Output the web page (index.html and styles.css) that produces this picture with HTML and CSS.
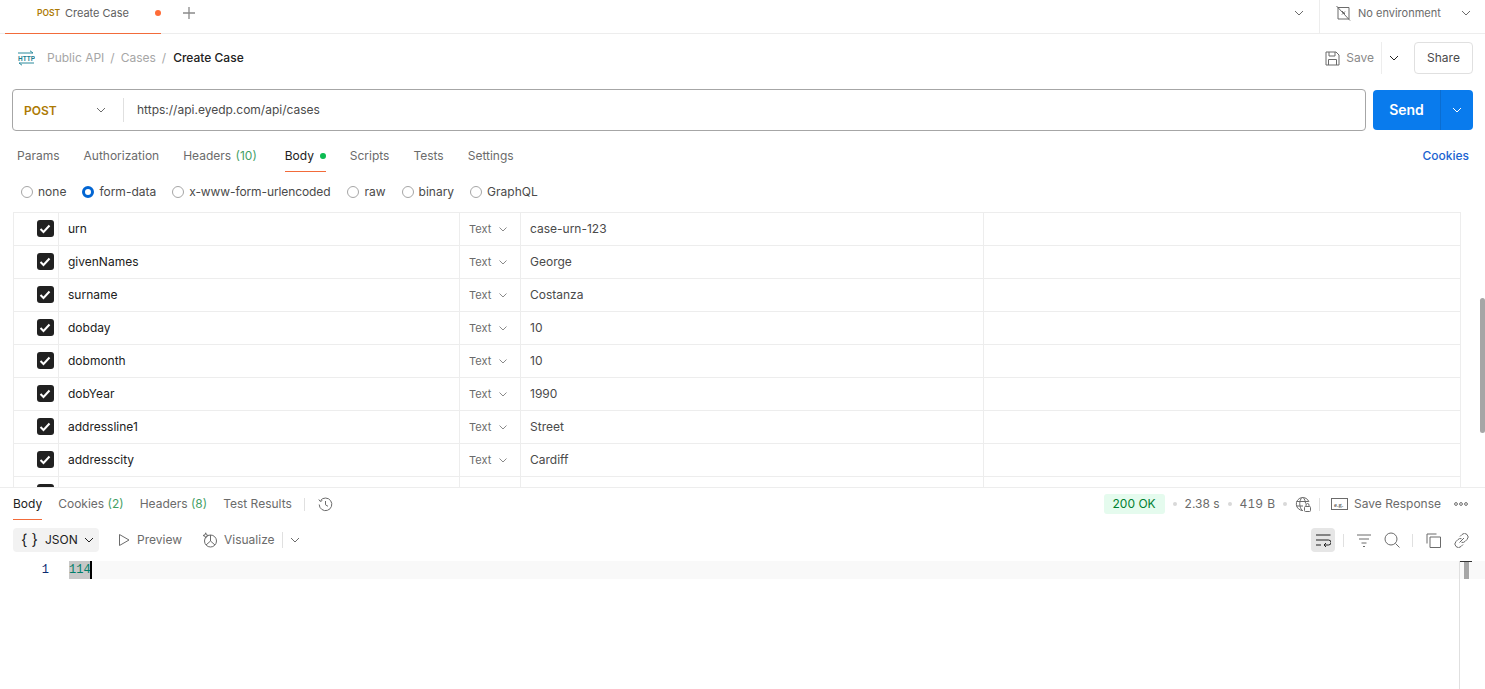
FILE: index.html
```html
<!DOCTYPE html>
<html lang="en">
<head>
<meta charset="utf-8">
<title>Create Case</title>
<link rel="stylesheet" href="styles.css">
</head>
<body>
<div class="app">
  <header class="tabbar">
    <div class="tab">
      <span class="tab-method">POST</span>
      <span class="tab-name">Create Case</span>
      <span class="tab-dot"></span>
    </div>
    <svg class="tab-plus" width="14" height="14" viewBox="0 0 14 14"><path d="M7 1v12M1 7h12" stroke="#8a8a8a" stroke-width="1.3" fill="none"/></svg>
    <div class="tabbar-space"></div>
    <svg class="chev tab-chev" width="10" height="6" viewBox="0 0 10 6"><path d="M1 1l4 4 4-4" stroke="#6b6b6b" fill="none"/></svg>
    <div class="env">
      <svg width="16" height="16" viewBox="0 0 16 16" fill="none" stroke="#6b6b6b"><path d="M3 2.500h11v11.500H3zM1.500 1l13.500 14.500M7 6l3 3M10 6.500l-3 3"/></svg>
      <span class="env-name">No environment</span>
      <svg class="chev" width="10" height="6" viewBox="0 0 10 6"><path d="M1 1l4 4 4-4" stroke="#6b6b6b" fill="none"/></svg>
    </div>
  </header>

  <div class="crumbs">
    <svg class="http-icon" width="18" height="16" viewBox="0 0 18 16" fill="none" stroke="#2b8a9b" stroke-width="1"><path d="M1 3h15M13 .8 16 3M17 13H2M5 15.200 2 13"/><text x="1" y="11" class="http-text">HTTP</text></svg>
    <span class="crumb">Public API</span><span class="sep">/</span>
    <span class="crumb">Cases</span><span class="sep">/</span>
    <span class="crumb-current">Create Case</span>
    <div class="crumb-space"></div>
    <svg width="15" height="15" viewBox="0 0 15 15" fill="none" stroke="#6b6b6b"><path d="M1 1h10l3 3v10H1zM4 1v4h6V1M3.500 14V8.500h8V14"/></svg>
    <span class="save">Save</span>
    <span class="save-div"></span>
    <svg class="save-chev" width="10" height="6" viewBox="0 0 10 6"><path d="M1 1l4 4 4-4" stroke="#212121" fill="none"/></svg>
    <button class="share">Share</button>
  </div>

  <div class="urlrow">
    <div class="urlbox">
      <span class="method">POST</span>
      <svg class="method-chev" width="10" height="6" viewBox="0 0 10 6"><path d="M1 1l4 4 4-4" stroke="#6b6b6b" fill="none"/></svg>
      <span class="url">https://api.eyedp.com/api/cases</span>
    </div>
    <div class="send">
      <span class="send-label">Send</span>
      <span class="send-more"><svg width="10" height="6" viewBox="0 0 10 6"><path d="M1 1l4 4 4-4" stroke="#fff" fill="none"/></svg></span>
    </div>
  </div>

  <nav class="reqtabs">
    <span class="rt">Params</span>
    <span class="rt">Authorization</span>
    <span class="rt rt-headers">Headers <em class="count">(10)</em></span>
    <span class="rt rt-active">Body <i class="green-dot"></i></span>
    <span class="rt">Scripts</span>
    <span class="rt">Tests</span>
    <span class="rt">Settings</span>
    <span class="cookies">Cookies</span>
  </nav>

  <div class="radios">
    <label class="radio"><i class="rd"></i>none</label>
    <label class="radio"><i class="rd rd-on"></i>form-data</label>
    <label class="radio radio-long"><i class="rd"></i>x-www-form-urlencoded</label>
    <label class="radio"><i class="rd"></i>raw</label>
    <label class="radio"><i class="rd"></i>binary</label>
    <label class="radio"><i class="rd"></i>GraphQL</label>
  </div>

  <div class="tablewrap">
    <div class="kv">
      <div class="row"><div class="c c-check"><span class="cb"><svg width="12" height="10" viewBox="0 0 12 10"><path d="M1.500 5l3 3 6-6.500" stroke="#fff" stroke-width="2" fill="none"/></svg></span></div><div class="c c-key">urn</div><div class="c c-type">Text<svg width="8" height="5" viewBox="0 0 8 5"><path d="M.5.500 4 4 7.500.500" stroke="#8a8a8a" fill="none"/></svg></div><div class="c c-val">case-urn-123</div><div class="c c-desc"></div></div>
      <div class="row"><div class="c c-check"><span class="cb"><svg width="12" height="10" viewBox="0 0 12 10"><path d="M1.500 5l3 3 6-6.500" stroke="#fff" stroke-width="2" fill="none"/></svg></span></div><div class="c c-key">givenNames</div><div class="c c-type">Text<svg width="8" height="5" viewBox="0 0 8 5"><path d="M.5.500 4 4 7.500.500" stroke="#8a8a8a" fill="none"/></svg></div><div class="c c-val">George</div><div class="c c-desc"></div></div>
      <div class="row"><div class="c c-check"><span class="cb"><svg width="12" height="10" viewBox="0 0 12 10"><path d="M1.500 5l3 3 6-6.500" stroke="#fff" stroke-width="2" fill="none"/></svg></span></div><div class="c c-key">surname</div><div class="c c-type">Text<svg width="8" height="5" viewBox="0 0 8 5"><path d="M.5.500 4 4 7.500.500" stroke="#8a8a8a" fill="none"/></svg></div><div class="c c-val">Costanza</div><div class="c c-desc"></div></div>
      <div class="row"><div class="c c-check"><span class="cb"><svg width="12" height="10" viewBox="0 0 12 10"><path d="M1.500 5l3 3 6-6.500" stroke="#fff" stroke-width="2" fill="none"/></svg></span></div><div class="c c-key">dobday</div><div class="c c-type">Text<svg width="8" height="5" viewBox="0 0 8 5"><path d="M.5.500 4 4 7.500.500" stroke="#8a8a8a" fill="none"/></svg></div><div class="c c-val">10</div><div class="c c-desc"></div></div>
      <div class="row"><div class="c c-check"><span class="cb"><svg width="12" height="10" viewBox="0 0 12 10"><path d="M1.500 5l3 3 6-6.500" stroke="#fff" stroke-width="2" fill="none"/></svg></span></div><div class="c c-key">dobmonth</div><div class="c c-type">Text<svg width="8" height="5" viewBox="0 0 8 5"><path d="M.5.500 4 4 7.500.500" stroke="#8a8a8a" fill="none"/></svg></div><div class="c c-val">10</div><div class="c c-desc"></div></div>
      <div class="row"><div class="c c-check"><span class="cb"><svg width="12" height="10" viewBox="0 0 12 10"><path d="M1.500 5l3 3 6-6.500" stroke="#fff" stroke-width="2" fill="none"/></svg></span></div><div class="c c-key">dobYear</div><div class="c c-type">Text<svg width="8" height="5" viewBox="0 0 8 5"><path d="M.5.500 4 4 7.500.500" stroke="#8a8a8a" fill="none"/></svg></div><div class="c c-val">1990</div><div class="c c-desc"></div></div>
      <div class="row"><div class="c c-check"><span class="cb"><svg width="12" height="10" viewBox="0 0 12 10"><path d="M1.500 5l3 3 6-6.500" stroke="#fff" stroke-width="2" fill="none"/></svg></span></div><div class="c c-key">addressline1</div><div class="c c-type">Text<svg width="8" height="5" viewBox="0 0 8 5"><path d="M.5.500 4 4 7.500.500" stroke="#8a8a8a" fill="none"/></svg></div><div class="c c-val">Street</div><div class="c c-desc"></div></div>
      <div class="row"><div class="c c-check"><span class="cb"><svg width="12" height="10" viewBox="0 0 12 10"><path d="M1.500 5l3 3 6-6.500" stroke="#fff" stroke-width="2" fill="none"/></svg></span></div><div class="c c-key">addresscity</div><div class="c c-type">Text<svg width="8" height="5" viewBox="0 0 8 5"><path d="M.5.500 4 4 7.500.500" stroke="#8a8a8a" fill="none"/></svg></div><div class="c c-val">Cardiff</div><div class="c c-desc"></div></div>
      <div class="row"><div class="c c-check"><span class="cb"></span></div><div class="c c-key"></div><div class="c c-type"></div><div class="c c-val"></div><div class="c c-desc"></div></div>
    </div>
    <div class="scrollthumb"></div>
  </div>

  <section class="response">
    <div class="restabs">
      <span class="rs rs-active">Body</span>
      <span class="rs">Cookies <em class="count">(2)</em></span>
      <span class="rs">Headers <em class="count">(8)</em></span>
      <span class="rs rs-last">Test Results</span>
      <span class="vdiv"></span>
      <svg class="hist" width="15" height="15" viewBox="0 0 15 15" fill="none" stroke="#6b6b6b"><path d="M2.500 3.500A6.300 6.300 0 1 1 1.200 7.500M.8 2.500l1.500 2 2-1M7.500 4v3.800l2.500 1.500"/></svg>
      <div class="res-space"></div>
      <span class="status">200 OK</span>
      <i class="mid"></i><span class="meta">2.38 s</span>
      <i class="mid"></i><span class="meta meta-size">419 B</span>
      <i class="mid mid-last"></i>
      <svg class="globe" width="16" height="16" viewBox="0 0 16 16" fill="none" stroke="#6b6b6b"><path d="M8 14.500A6.500 6.500 0 1 1 14 6M1.500 5.500h12M1.500 10H8M7 1.500c-3 3-3 9 0 13M8 1.500c1.500 1.500 2.500 3.500 2.500 6"/><rect x="9.500" y="10.500" width="6" height="5" rx="1" fill="#fff"/><path d="M11 10.500V9a1.500 1.500 0 0 1 3 0v1.500"/></svg>
      <span class="vdiv vdiv-r"></span>
      <svg width="17" height="12" viewBox="0 0 17 12" fill="none"><rect x=".5" y=".5" width="16" height="11" stroke="#6b6b6b"/><text x="3" y="8.500" class="eg">e.g.</text></svg>
      <span class="saveres">Save Response</span>
      <svg class="dots" width="14" height="4" viewBox="0 0 14 4" fill="none" stroke="#6b6b6b"><circle cx="2" cy="2" r="1.400"/><circle cx="7" cy="2" r="1.400"/><circle cx="12" cy="2" r="1.400"/></svg>
    </div>
    <div class="toolbar">
      <div class="json"><span class="braces">{ }</span><span>JSON</span><svg width="10" height="6" viewBox="0 0 10 6"><path d="M1 1l4 4 4-4" stroke="#212121" fill="none"/></svg></div>
      <svg class="play" width="12" height="14" viewBox="0 0 12 14" fill="none"><path d="M1.500 1.500 11 7l-9.500 5.500z" stroke="#6b6b6b"/></svg>
      <span class="tb-label tb-preview">Preview</span>
      <svg class="viz" width="16" height="16" viewBox="0 0 16 16" fill="none" stroke="#6b6b6b"><circle cx="8.500" cy="9" r="6"/><path d="M8.500 3v6l4.500 4M8.500 9l-4.500 4M1 3.500l2-.7.700-2 .7 2 2 .7-2 .7-.7 2-.7-2z"/></svg>
      <span class="tb-label">Visualize</span>
      <span class="vdiv vdiv-t"></span>
      <svg class="tb-chev" width="10" height="6" viewBox="0 0 10 6"><path d="M1 1l4 4 4-4" stroke="#6b6b6b" fill="none"/></svg>
      <div class="res-space"></div>
      <span class="wrapbtn"><svg width="15" height="13" viewBox="0 0 15 13" fill="none" stroke="#212121"><path d="M0 1h14.500M0 6h12.500a2 2 0 0 1 0 5H8M10 9l-2 2 2 2M0 11h5"/></svg></span>
      <span class="vdiv vdiv-a"></span>
      <svg width="14" height="13" viewBox="0 0 14 13" fill="none" stroke="#6b6b6b"><path d="M0 1h14M2 5h10M4.500 9h5M6 12.500h2"/></svg>
      <svg class="ico-search" width="16" height="16" viewBox="0 0 16 16" fill="none" stroke="#6b6b6b"><circle cx="7" cy="7" r="6"/><path d="M11.500 11.500l4 4"/></svg>
      <span class="vdiv vdiv-b"></span>
      <svg width="15" height="15" viewBox="0 0 15 15" fill="none" stroke="#6b6b6b"><path d="M4 4h10.500v10.500H4zM1 10.500V1h9.500" stroke-linejoin="round"/></svg>
      <svg class="ico-link" width="15" height="15" viewBox="0 0 15 15" fill="none" stroke="#6b6b6b"><path d="M5.500 9.500l4.500-4.500M6 3.500l2-2a3.500 3.500 0 0 1 5 5l-2 2a3.500 3.500 0 0 1-3.500.8M9 11.500l-2 2a3.500 3.500 0 0 1-5-5l2-2a3.500 3.500 0 0 1 3.500-.8"/></svg>
    </div>
    <div class="editor">
      <span class="ln">1</span>
      <div class="code-line"><span class="code">114</span><span class="caret"></span></div>
      <div class="minimap"><span class="mini-bar"></span></div>
    </div>
  </section>
</div>
</body>
</html>
```

FILE: styles.css
```css
* { box-sizing: border-box; }
html, body { margin: 0; height: 100%; overflow: hidden; background: #fff; }
body { font-family: Inter, "Liberation Sans", sans-serif; font-size: 12px; color: #6b6b6b; }
em { font-style: normal; }
svg { flex: none; display: block; }
.app { height: 689px; display: flex; flex-direction: column; overflow: hidden; position: relative; }

.tabbar { height: 34px; flex: none; display: flex; align-items: center; border-bottom: 1px solid #ededed; padding-left: 5px; }
.tab { width: 156px; height: 34px; display: flex; align-items: center; padding: 0 0 7px 32px; border-bottom: 1px solid #f26b3a; font-size: 11px; white-space: nowrap; }
.tab-method { font-size: 8.500px; font-weight: 600; color: #ad7a03; width: 28px; }
.tab-name { color: #5e5e5e; }
.tab-dot { width: 6px; height: 6px; border-radius: 50%; background: #ff6c37; margin-left: 26px; }
.tab-plus { margin-left: 21px; margin-bottom: 7px; }
.tabbar-space { flex: 1; }
.tab-chev { margin-right: 15px; margin-bottom: 7px; }
.env { width: 166px; height: 33px; display: flex; align-items: center; border-left: 1px solid #ededed; padding: 0 0 7px 15px; align-self: flex-start; }
.env-name { font-size: 11px; margin-left: 7px; color: #6b6b6b; width: 103px; white-space: nowrap; }

.crumbs { height: 48px; flex: none; display: flex; align-items: center; padding: 0 12px 0 17px; line-height: 14px; }
.http-icon { margin-right: 12px; }
.http-text { font: 700 6.500px "Liberation Sans", sans-serif; fill: #1f7f91; stroke: none; }
.crumb { color: #a6a6a6; }
.sep { color: #a6a6a6; margin: 0 6px; }
.crumb-current { color: #212121; font-weight: 500; margin-left: 1px; }
.crumb-space { flex: 1; }
.save { margin-left: 6px; color: #8a8a8a; }
.save-div { width: 1px; height: 32px; background: #ededed; margin: 0 7px 0 7px; }
.save-chev { margin-right: 15px; }
.share { width: 59px; height: 32px; border: 1px solid #e0e0e0; border-radius: 4px; background: #fff; font: 12px/14px Inter, sans-serif; color: #4a4a4a; padding: 0; }

.urlrow { flex: none; height: 42px; margin: 7px 12px 0; display: flex; gap: 7px; align-items: center; }
.urlbox { width: 1354px; height: 42px; border: 1px solid #a6a6a6; border-radius: 4px; display: flex; align-items: center; padding-left: 11px; }
.method { width: 72px; font-weight: 600; color: #ad7a03; font-size: 12px; }
.method-chev { margin-right: 17px; }
.url { border-left: 1px solid #e0e0e0; padding-left: 13px; height: 24px; line-height: 24px; color: #4a4a4a; }
.send { width: 100px; height: 40px; background: #097bed; border-radius: 4px; display: flex; color: #fff; align-items: stretch; }
.send-label { width: 68px; text-align: center; line-height: 40px; font-size: 14px; font-weight: 600; border-right: 1px solid #0a6dd1; }
.send-more { flex: 1; display: flex; align-items: center; justify-content: center; }

.reqtabs { flex: none; height: 41px; display: flex; padding: 0 16px 0 17px; align-items: stretch; }
.rt { margin-right: 24px; line-height: 42px; height: 41px; padding-top: 4px; color: #6b6b6b; white-space: nowrap; }
.rt-headers { margin-right: 28px; }
.rt-headers .count { margin-left: 1px; }
.rt-active { color: #212121; border-bottom: 1px solid #f26b3a; width: 41px; display: flex; align-items: center; gap: 6px; line-height: 14px; padding-top: 9px; }
.count { color: #007f31; opacity: .75; }
.green-dot { width: 6px; height: 6px; border-radius: 50%; background: #0cbb52; display: block; }
.cookies { margin-left: auto; color: #1a63d1; font-weight: 500; line-height: 42px; padding-top: 4px; height: 41px; }

.radios { flex: none; height: 40px; display: flex; align-items: center; padding: 0 0 0 21px; line-height: 14px; }
.radio { display: flex; align-items: center; gap: 5px; margin-right: 16px; color: #4a4a4a; height: 40px; }
.radio-long { letter-spacing: -.1px; margin-right: 17px; }
.rd { width: 12px; height: 12px; border-radius: 50%; border: 1px solid #a6a6a6; display: block; }
.rd-on { border: 3.500px solid #0265d2; }

.tablewrap { flex: none; height: 276px; overflow: hidden; padding-left: 13px; border-bottom: 1px solid #ededed; }
.kv { width: 1448px; border-top: 1px solid #ededed; }
.row { height: 33px; display: flex; border-bottom: 1px solid #ededed; }
.c { border-left: 1px solid #ededed; display: flex; align-items: center; color: #212121; padding-left: 9px; height: 32px; line-height: 14px; }
.c-check { width: 45px; justify-content: center; padding: 0 0 1px 18px; }
.c-key { width: 401px; color: #212121; }
.c-type { width: 61px; justify-content: flex-start; color: #6b6b6b; font-size: 11px; gap: 8px; }
.c-val { width: 463px; color: #4a4a4a; }
.c-desc { flex: 1; border-right: 1px solid #ededed; }
.cb { width: 17px; height: 17px; border-radius: 3px; background: #212121; display: flex; align-items: center; justify-content: center; }
.scrollthumb { position: absolute; left: 1480px; top: 298px; width: 5px; height: 135px; background: #a6a6a6; border-radius: 3px; }

.response { flex: 1; display: flex; flex-direction: column; }
.restabs { flex: none; height: 32px; display: flex; align-items: center; padding: 0 17px 0 13px; line-height: 14px; }
.rs { margin-right: 16px; line-height: 32px; height: 32px; color: #6b6b6b; white-space: nowrap; }
.rs-last { margin-right: 12px; }
.rs-active { color: #212121; border-bottom: 1px solid #f26b3a; }
.vdiv { width: 1px; height: 13px; background: #e0e0e0; display: block; flex: none; }
.hist { margin-left: 13px; }
.res-space { flex: 1; }
.status { background: #e5fbee; color: #007f31; border-radius: 3px; width: 61px; height: 20px; line-height: 20px; text-align: center; font-weight: 400; }
.mid { width: 4px; height: 4px; border-radius: 50%; background: #d9d9d9; margin: 0 8px; display: block; }
.mid-last { margin-right: 5px; }
.meta { color: #6b6b6b; }
.meta-size { font-feature-settings: "tnum"; word-spacing: 1px; }
.globe { margin-left: 3px; }
.vdiv-r { margin: 0 11px 0 8px; }
.eg { font: 700 6.500px "Liberation Serif", serif; fill: #6b6b6b; }
.saveres { margin-left: 6px; color: #6b6b6b; white-space: nowrap; }
.dots { margin-left: 13px; }

.toolbar { flex: none; height: 40px; display: flex; align-items: center; padding: 0 16px 0 13px; line-height: 14px; }
.json { width: 86px; height: 24px; background: #f2f2f2; border-radius: 4px; display: flex; align-items: center; color: #212121; padding-left: 8px; }
.braces { font-size: 15px; margin-right: 7px; }
.json svg { margin-left: 6px; }
.play { margin-left: 19px; }
.tb-label { margin-left: 8px; color: #6b6b6b; }
.tb-preview { margin-left: 7px; }
.viz { margin-left: 20px; margin-right: -2px; }
.vdiv-t { height: 16px; margin-left: 7px; }
.tb-chev { margin-left: 7px; }
.wrapbtn { width: 24px; height: 24px; background: #e6e6e6; border-radius: 4px; display: flex; align-items: center; justify-content: center; }
.vdiv-a { margin: 0 13px 0 8px; }
.ico-search { margin-left: 13px; }
.vdiv-b { margin: 0 13px 0 12px; }
.ico-link { margin-left: 13px; }

.editor { flex: none; height: 18px; margin-top: 1px; background: #f9f9f9; display: flex; position: relative; font-family: "Liberation Mono", "DejaVu Sans Mono", monospace; font-size: 12px; line-height: 18px; }
.ln { width: 69px; padding-right: 20px; text-align: right; color: #0a2a6e; background: #fff; }
.code-line { display: flex; }
.code { background: #c8c8c8; color: #007f6a; width: 21px; }
.caret { width: 2px; background: #000; }
.minimap { position: absolute; left: 1459px; top: 0; width: 1px; height: 128px; background: #e0e0e0; }
.mini-bar { position: absolute; left: 1px; top: 0; width: 12px; height: 18px; border-top: 1px solid #333; }
.mini-bar::after { content: ""; position: absolute; left: 4px; top: 0; width: 5px; height: 17px; background: #a6a6a6; }
```
